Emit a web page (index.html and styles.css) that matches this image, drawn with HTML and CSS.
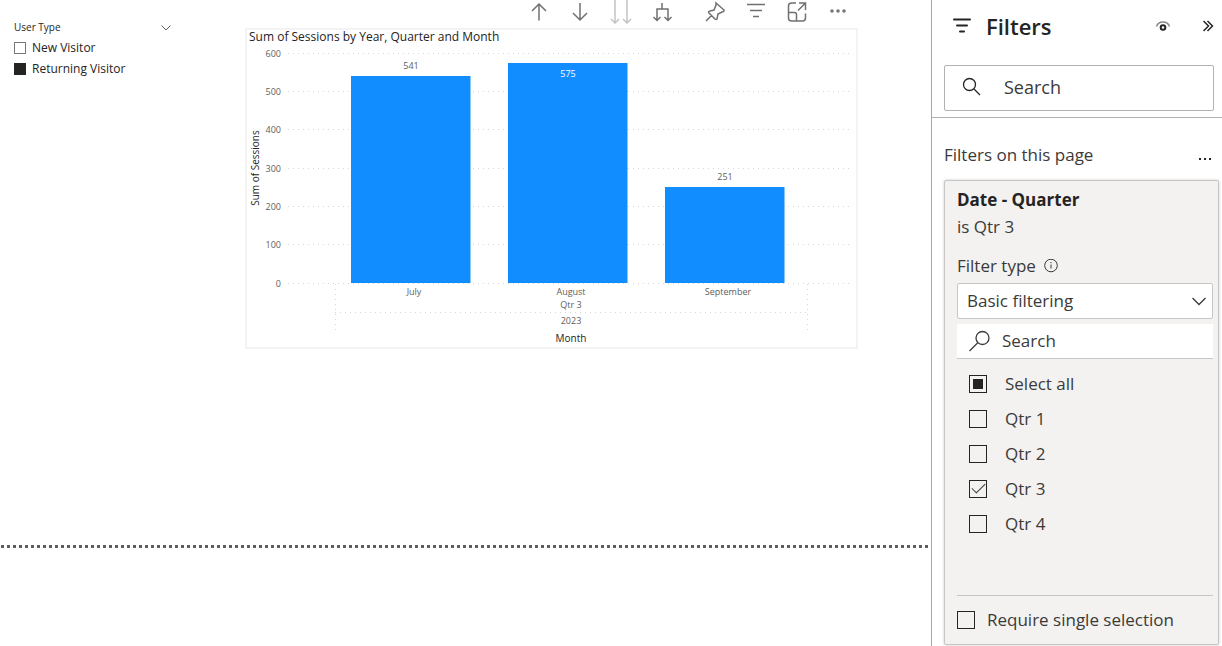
FILE: index.html
```html
<!DOCTYPE html>
<html lang="en">
<head>
<meta charset="utf-8">
<title>Sessions report</title>
<link rel="stylesheet" href="styles.css">
</head>
<body>
<div class="app">
  <main class="report">
    <div class="canvas">
      <section class="slicer">
        <header class="slicer-head">
          <h2 class="slicer-title">User Type</h2>
          <button class="icon-btn" aria-label="Expand User Type"><svg width="10" height="6" viewBox="0 0 10 6"><path d="M.5.5 5 5 9.5.5"/></svg></button>
        </header>
        <label class="slicer-item"><input class="slicer-box" type="checkbox">New Visitor</label>
        <label class="slicer-item"><input class="slicer-box" type="checkbox" checked>Returning Visitor</label>
      </section>
      <section class="visual">
        <div class="toolbar">
          <button class="icon-btn tool" aria-label="Drill up"><svg width="24" height="24" viewBox="0 0 24 24"><path d="M12 20.500V4M5 11l7-7 7 7"/></svg></button>
          <button class="icon-btn tool" aria-label="Drill down"><svg width="24" height="24" viewBox="0 0 24 24"><path d="M12 3v17M5 13l7 7 7-7"/></svg></button>
          <button class="icon-btn tool tool-off" aria-label="Go to the next level"><svg width="24" height="24" viewBox="0 0 24 24"><path d="M6 0v23M2 19l4 4 4-4M18 0v23M14 19l4 4 4-4"/></svg></button>
          <button class="icon-btn tool" aria-label="Expand all down one level"><svg width="24" height="24" viewBox="0 0 24 24"><path d="M12 3v6M7 20V9h11v11M3.500 17 7 20.500 10.500 17M14.500 17l3.500 3.500 3.500-3.500"/></svg></button>
          <button class="icon-btn tool tool-gap" aria-label="Pin visual"><svg width="24" height="24" viewBox="0 0 24 24"><path d="m13 3 8 7c0 2-1 2-2 2l-4 2-1 5c-1 1-2 0-2 0l-6-6c-1-1 0-2 1-2l4-1 2-5c0-1 0-2 0-2ZM8.500 15.500 3 21"/></svg></button>
          <button class="icon-btn tool" aria-label="Filters on visual"><svg width="24" height="24" viewBox="0 0 24 24"><path d="M3 4.500h18M6 10.500h12M9 16.500h6"/></svg></button>
          <button class="icon-btn tool" aria-label="Focus mode"><svg width="24" height="24" viewBox="0 0 24 24"><path d="M11 3H6.500Q3.500 3 3.500 6v12q0 3 3 3h11q3 0 3-3v-4.500M3.500 12.500h6q2 0 2 2V21M14 3h6.500v7M20 3.500l-7 7"/></svg></button>
          <button class="icon-btn tool" aria-label="More options"><svg class="dots" width="24" height="24" viewBox="0 0 24 24"><circle cx="6" cy="11" r="1.800"/><circle cx="12" cy="11" r="1.800"/><circle cx="18" cy="11" r="1.800"/></svg></button>
        </div>
        <svg class="chart" viewBox="0 0 609 317" role="img" aria-label="Sum of Sessions by Year, Quarter and Month">
          <text class="chart-title" x="2" y="11">Sum of Sessions by Year, Quarter and Month</text>
          <g class="grid">
            <path d="M41 23H606M41 61H606M41 99H606M41 138H606M41 176H606M41 214H606M41 253H606"/>
            <path d="M88 282H560M88 254v46M560 254v46"/>
          </g>
          <g class="ticks">
            <text x="34" y="27">600</text><text x="34" y="65">500</text><text x="34" y="103">400</text><text x="34" y="142">300</text><text x="34" y="180">200</text><text x="34" y="218">100</text><text x="34" y="257">0</text>
          </g>
          <text class="axis-title" transform="translate(12 138) rotate(-90)">Sum of Sessions</text>
          <g class="bars">
            <rect x="104" y="46" width="119.500" height="207"/><rect x="261" y="33" width="119.500" height="220"/><rect x="418" y="157" width="119.500" height="96"/>
          </g>
          <g class="labels">
            <text x="164" y="39">541</text><text class="inside" x="321" y="47">575</text><text x="478" y="150">251</text>
            <text x="167" y="265">July</text><text x="324" y="265">August</text><text x="481" y="265">September</text>
            <text x="324" y="278">Qtr 3</text><text x="324" y="294">2023</text>
          </g>
          <text class="axis-title" x="324" y="312">Month</text>
        </svg>
      </section>
    </div>
    <div class="page-edge"></div>
  </main>
  <aside class="pane">
    <header class="pane-top">
      <div class="pane-head">
        <svg class="funnel" width="20" height="18" viewBox="0 0 20 18"><path d="M2 2.500h16M5 8.500h10M8 14.500h4"/></svg>
        <h1 class="pane-title">Filters</h1>
        <button class="icon-btn" aria-label="Show filter pane to readers"><svg class="eye" width="16" height="12" viewBox="0 0 16 12"><path class="lid" d="M1.500 6.500Q3 2 8 2T14.500 6.500"/><circle cx="8" cy="7.500" r="2.300"/></svg></button>
        <button class="icon-btn" aria-label="Collapse pane"><svg class="chevrons" width="11" height="12" viewBox="0 0 11 12"><path d="m.500 1 5 5-5 5M4.500 1l5 5-5 5"/></svg></button>
      </div>
      <label class="search">
        <svg class="lens" width="20" height="20" viewBox="0 0 20 20"><circle cx="7.500" cy="7.500" r="6"/><path d="m12 12 6 6"/></svg>
        <input class="field" type="text" placeholder="Search" aria-label="Search filters">
      </label>
    </header>
    <div class="group-head">
      <h2 class="group-title">Filters on this page</h2>
      <button class="icon-btn" aria-label="More options"><svg class="dots dark" width="14" height="12" viewBox="0 0 14 12"><path d="M1 9h2v2H1zM6 9h2v2H6zM11 9h2v2h-2z"/></svg></button>
    </div>
    <section class="card">
      <h3 class="card-title">Date - Quarter</h3>
      <p class="card-line">is Qtr 3</p>
      <div class="type-row">
        <label for="filter-type">Filter type</label>
        <svg class="info" width="14" height="14" viewBox="0 0 14 14"><circle cx="7" cy="6.500" r="6.300"/><path d="M7 5.500v4M7 3v1.200"/></svg>
      </div>
      <div class="select-wrap">
        <select class="select" id="filter-type"><option>Basic filtering</option></select>
        <svg class="caret" width="14" height="10" viewBox="0 0 14 10"><path d="m.500 2 6.500 6.500 6.500-6.500"/></svg>
      </div>
      <label class="value-search">
        <svg class="lens" width="24" height="24" viewBox="0 0 24 24"><circle cx="14.500" cy="9" r="6.500"/><path d="M10 13.500 1.500 22"/></svg>
        <input class="field" type="text" placeholder="Search" aria-label="Search values">
      </label>
      <div class="options">
        <label class="option"><input class="box some" type="checkbox">Select all</label>
        <label class="option"><input class="box" type="checkbox">Qtr 1</label>
        <label class="option"><input class="box" type="checkbox">Qtr 2</label>
        <label class="option"><input class="box" type="checkbox" checked>Qtr 3</label>
        <label class="option"><input class="box" type="checkbox">Qtr 4</label>
      </div>
      <label class="single"><input class="box" type="checkbox">Require single selection</label>
    </section>
  </aside>
</div>
</body>
</html>
```
FILE: styles.css
```css
* { box-sizing: border-box; }
body { margin: 0; background: #fff; color: #252423; font-family: "Open Sans", "Noto Sans", sans-serif; }
h1, h2, h3, p { margin: 0; font-weight: 400; }
svg { display: block; fill: none; stroke: currentColor; flex: none; }
.icon-btn { border: 0; padding: 0; background: none; color: inherit; display: flex; }

.app { display: flex; min-height: 100vh; }
.report { flex: 1; min-width: 0; }
.canvas { display: flex; min-height: 545px; padding-right: 73px; }
.page-edge { height: 3px; margin: 0 2px 0 1px; background: repeating-linear-gradient(90deg, #605e5c 0 3px, transparent 3px 6px); }

.slicer { flex: none; width: 245px; padding: 18px 74px 0 14px; font-size: 12px; }
.slicer-head { display: flex; justify-content: space-between; align-items: center; height: 19px; color: #605e5c; }
.slicer-title { font-size: 10px; font-weight: 500; line-height: 19px; color: #252423; }
.slicer-item { display: flex; align-items: center; gap: 6px; height: 21px; }
.slicer-box { appearance: none; width: 12px; height: 12px; margin: 0; border: 1px solid #7a7877; background: #fff; }
.slicer-box:checked { background: #252423; border-color: #252423; }

.visual { flex: 1; min-width: 0; }
.toolbar { display: flex; justify-content: flex-end; gap: 17px; height: 28px; padding-right: 8px; color: #707070; }
.tool { height: 24px; }
.tool-off { color: #c4c4c4; }
.tool-gap { margin-left: 12px; }
.toolbar svg { stroke-width: 1.5; }
.dots { fill: #777; stroke: none; }
.dots.dark { fill: #252423; }

.chart { width: 100%; border: 2px solid #f3f3f3; font-size: 9px; }
.chart text { stroke: none; fill: #605e5c; }
.chart .chart-title { font-size: 12px; fill: #252423; }
.chart .axis-title { font-size: 10px; font-weight: 500; fill: #252423; text-anchor: middle; }
.grid { stroke: #d6d6d6; stroke-dasharray: 1 4; shape-rendering: crispEdges; }
.ticks { text-anchor: end; }
.bars { fill: #118dff; stroke: none; }
.labels { text-anchor: middle; }
.chart .inside { fill: #fff; }

.pane { flex: none; width: 291px; border-left: 1px solid #a6a6a6; font-size: 17px; line-height: 24px; }
.pane-top { padding: 10px 8px 6px 12px; border-bottom: 1px solid #b3b0ad; }
.pane-head { display: flex; align-items: center; height: 32px; padding-left: 8px; }
.pane-title { flex: 1; margin-left: 14px; font-size: 22px; font-weight: 600; line-height: 32px; }
.funnel { stroke-width: 2; stroke-linecap: round; }
.eye { margin-right: 32px; stroke-width: 2; }
.lid { stroke: #8a8886; stroke-width: 1.5; }
.chevrons { stroke-width: 1.5; }
.search { display: flex; align-items: center; gap: 22px; height: 46px; margin-top: 23px; padding: 0 0 2px 17px; border: 1px solid #b3b0ad; border-radius: 2px; font-size: 18px; }
.lens { stroke-width: 1.3; }
.field { flex: 1; min-width: 0; padding: 0; border: 0; background: none; color: inherit; font: inherit; outline: 0; }
.field::placeholder { color: #3b3a39; opacity: 1; }

.group-head { display: flex; align-items: center; justify-content: space-between; padding: 25px 10px 13px 12px; }
.group-title { font-size: 17px; line-height: 24px; color: #3b3a39; }

.card { margin: 0 3px 1px 12px; padding: 7px 5px 0 12px; border: 1px solid #c8c6c4; border-radius: 2px; background: #f3f2f1; box-shadow: 0 0 3px rgba(0, 0, 0, 0.2); color: #3b3a39; }
.card-title { font-size: 17px; font-weight: 700; color: #252423; }
.card-line { margin-top: 3px; }
.type-row { display: flex; align-items: center; gap: 8px; margin-top: 15px; }
.select-wrap { display: grid; align-items: center; margin-top: 5px; }
.select { grid-area: 1 / 1; width: 100%; height: 36px; padding: 0 9px; appearance: none; border: 1px solid #c8c6c4; border-radius: 2px; background: #fff; color: inherit; font: inherit; }
.caret { grid-area: 1 / 1; justify-self: end; margin-right: 7px; stroke-width: 1.3; pointer-events: none; }
.value-search { display: flex; align-items: center; gap: 10px; height: 35px; margin-top: 5px; padding-left: 11px; border-bottom: 1px solid #c8c6c4; background: #fff; }
.options { padding: 7px 0 54px 12px; }
.option { display: flex; align-items: center; gap: 18px; height: 35px; }
.box { appearance: none; display: grid; place-content: center; flex: none; width: 18px; height: 18px; margin: 0; border: 1px solid #252423; }
.some::before { content: ""; width: 10px; height: 10px; background: #252423; }
.box:checked::before { content: ""; width: 12px; height: 6px; border: solid #3b3a39; border-width: 0 0 1px 1px; transform: translateY(-2px) rotate(-45deg); }
.single { display: flex; align-items: center; gap: 12px; height: 49px; border-top: 1px solid #c8c6c4; }
```
